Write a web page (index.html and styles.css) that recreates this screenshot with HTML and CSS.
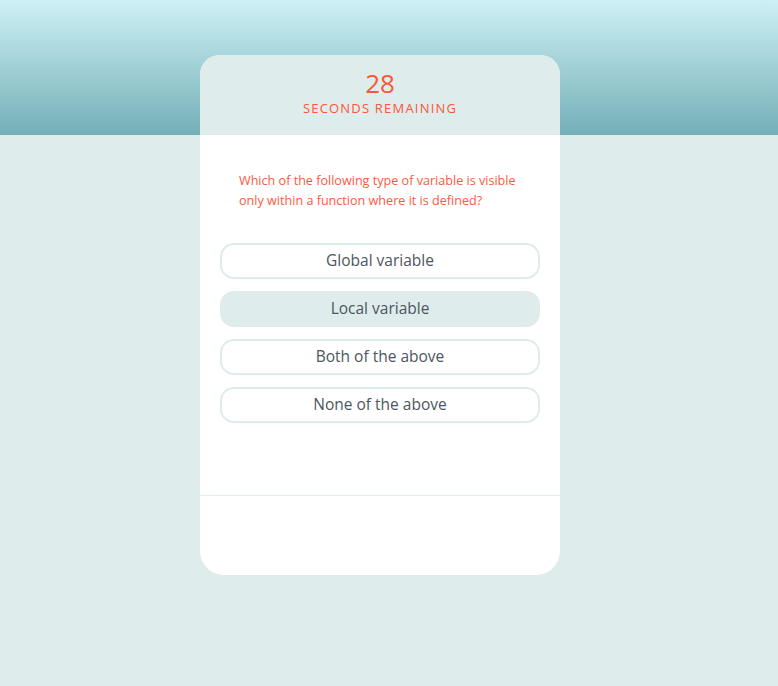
FILE: index.html
```html
<!DOCTYPE html>
<html>
<head>
<meta charset="utf-8">
<link rel="stylesheet" href="styles.css">
</head>
<body>
<div class="page">
<div class="card">
  <div class="card-head">
    <div class="timer">28</div>
    <div class="timer-label">SECONDS REMAINING</div>
  </div>
  <div class="card-body">
    <p class="question">Which of the following type of variable is visible only within a function where it is defined?</p>
    <div class="options">
      <div class="option">Global variable</div>
      <div class="option selected">Local variable</div>
      <div class="option">Both of the above</div>
      <div class="option">None of the above</div>
    </div>
  </div>
  <div class="card-foot"></div>
</div>
</div>
</body>
</html>
```

FILE: styles.css
```css
html, body {
  margin: 0;
  padding: 0;
}
body {
  min-height: 686px;
  background: linear-gradient(to bottom, #cdf1f5 0%, #74afb7 100%) top left / 100% 135px no-repeat, #dfecec;
  font-family: "Open Sans", "Noto Sans", sans-serif;
  box-sizing: border-box;
}
.page {
  width: 760px;
  padding-top: 55px;
}
.card {
  width: 360px;
  margin: 0 auto;
  border-radius: 20px 20px 24px 24px;
  overflow: hidden;
  background: #fff;
}
.card-head {
  height: 80px;
  background: #dfecec;
  display: flex;
  flex-direction: column;
  align-items: center;
  padding-top: 12px;
  box-sizing: border-box;
  color: #fa5637;
}
.timer {
  font-size: 26px;
  line-height: 32px;
}
.timer-label {
  font-size: 13px;
  letter-spacing: 1.2px;
  line-height: 18px;
}
.card-body {
  height: 361px;
  padding: 36px 20px 0;
  box-sizing: border-box;
  border-bottom: 1px solid #e0eded;
}
.question {
  margin: 0 0 32px;
  padding: 0 19px;
  font-size: 12.6px;
  line-height: 20px;
  color: #fb5a3e;
}
.options {
  display: flex;
  flex-direction: column;
  gap: 12px;
}
.option {
  height: 36px;
  box-sizing: border-box;
  border: 2px solid #dfecec;
  border-radius: 14px;
  display: flex;
  align-items: center;
  justify-content: center;
  padding-bottom: 2px;
  font-size: 15.5px;
  color: #4d5660;
}
.option.selected {
  background: #dfecec;
}
.card-foot {
  height: 79px;
}
```
